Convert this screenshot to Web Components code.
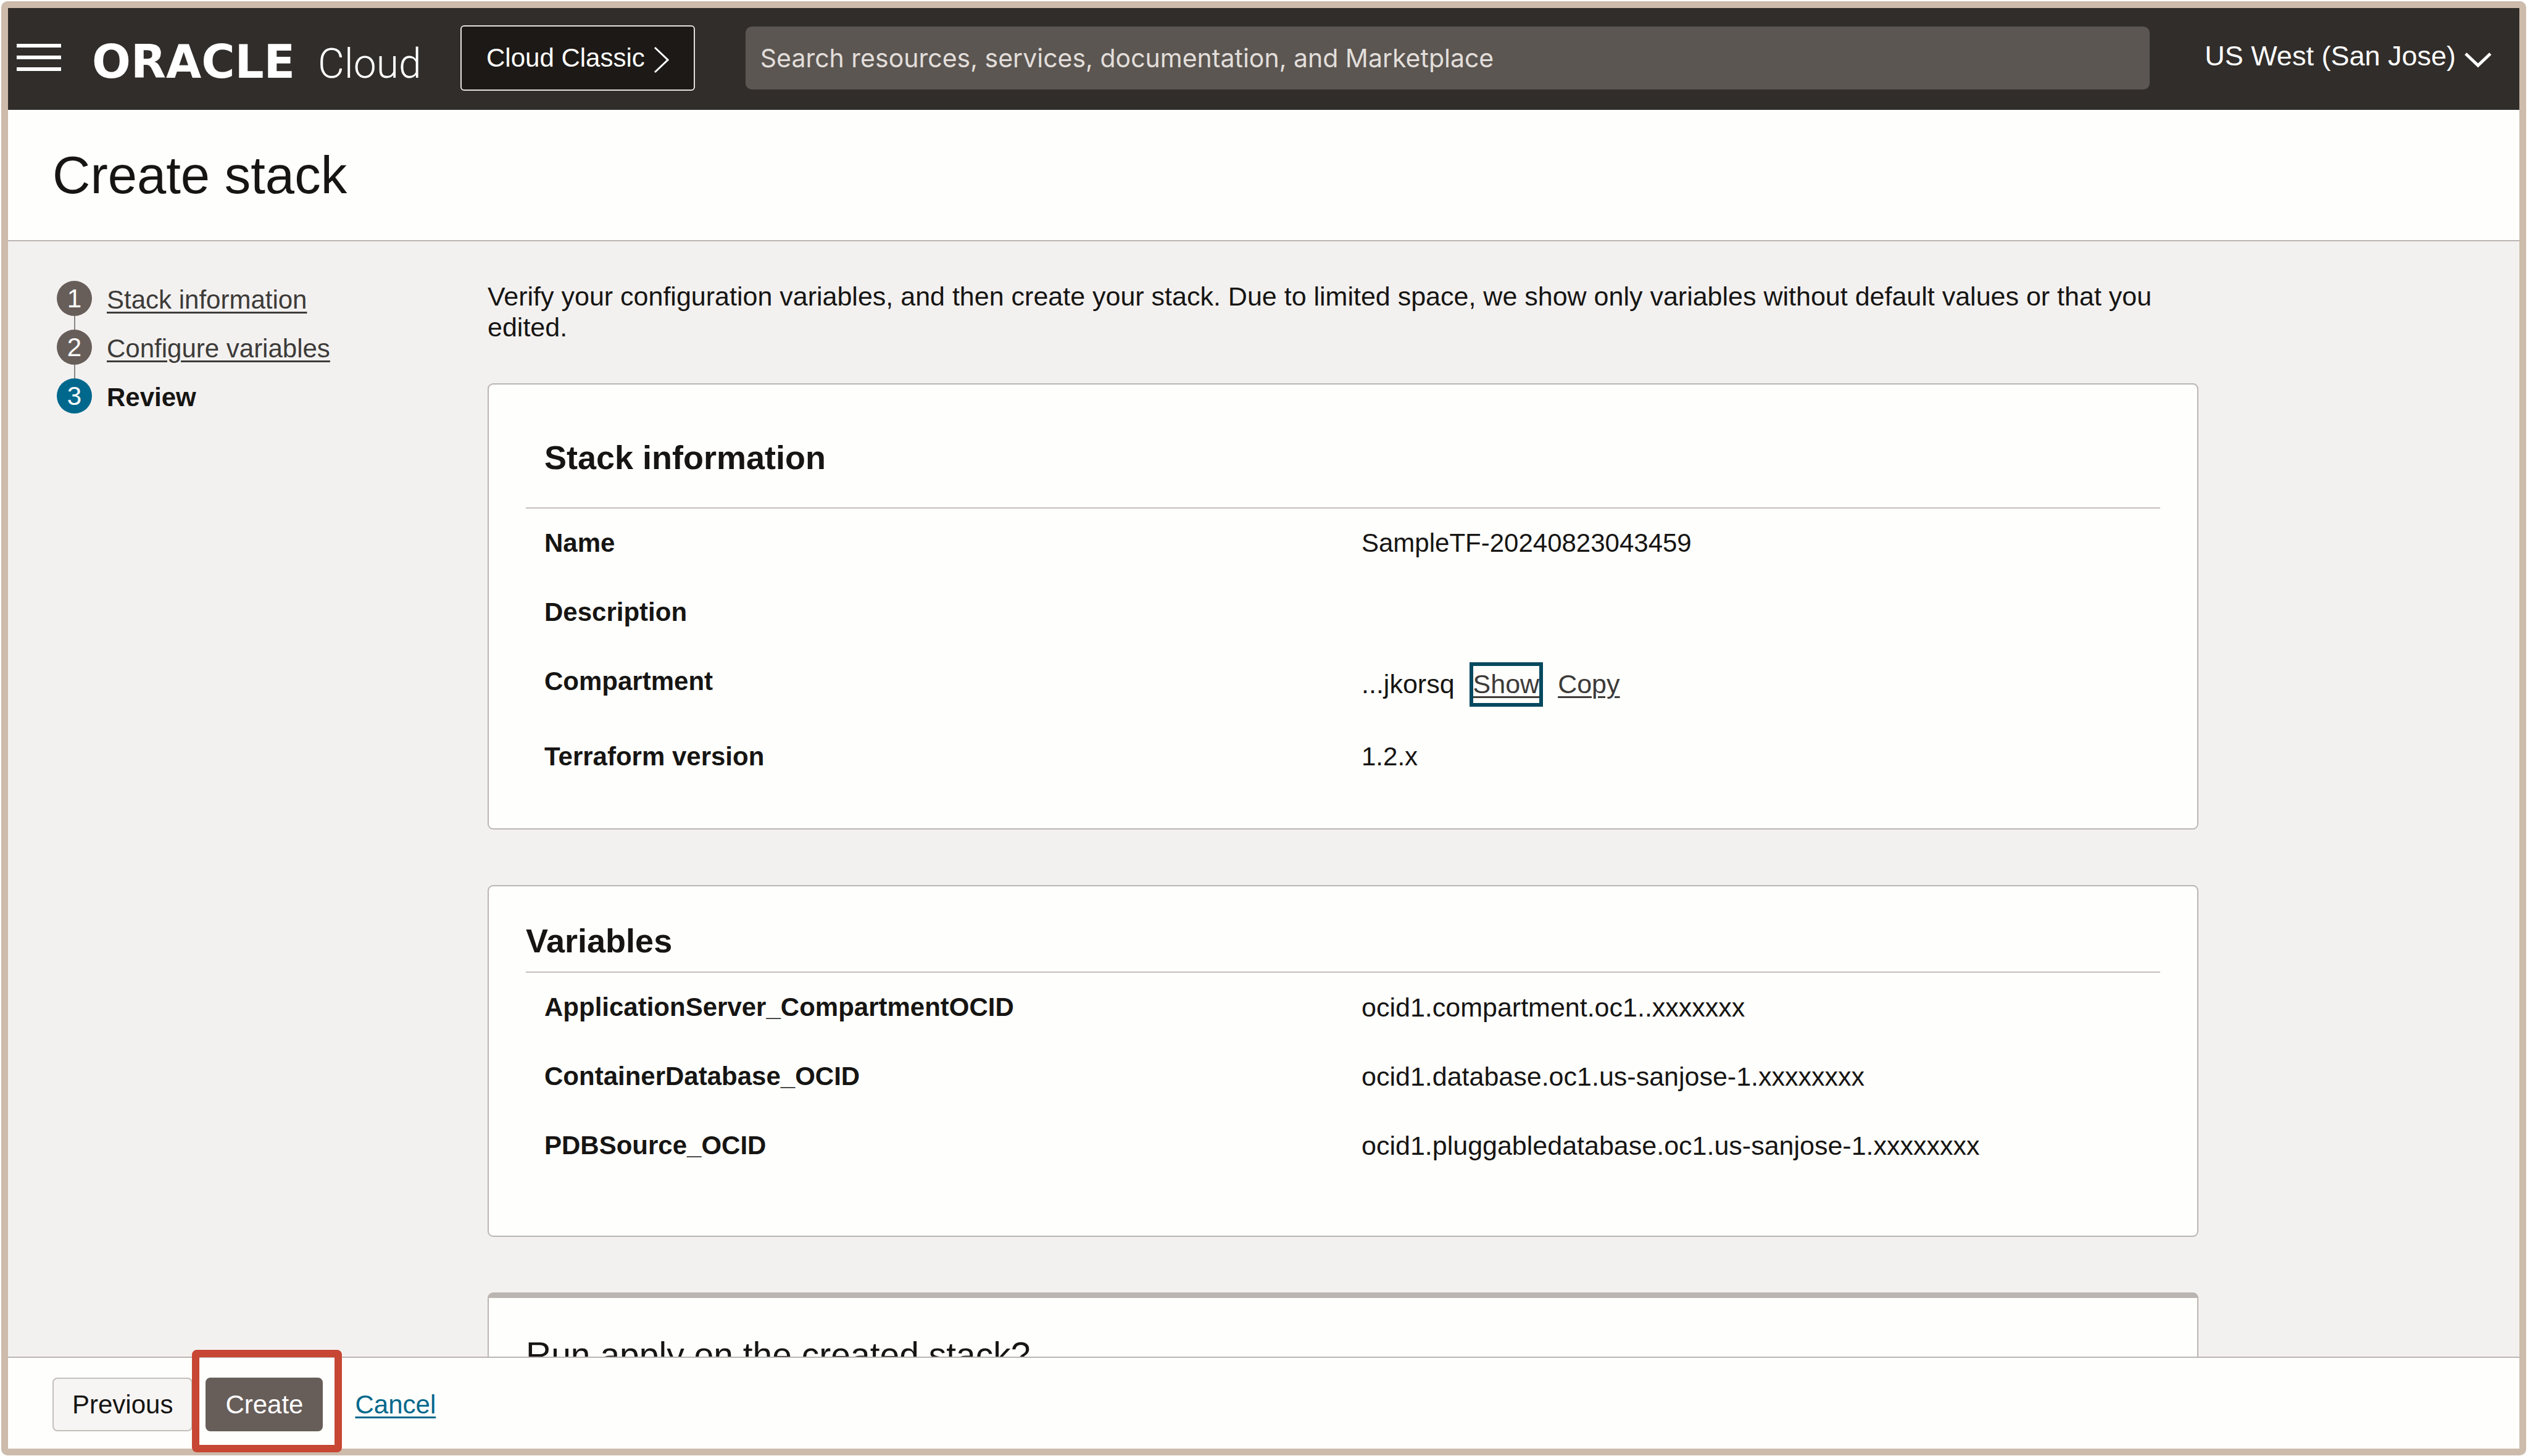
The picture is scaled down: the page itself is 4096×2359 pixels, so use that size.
<!DOCTYPE html>
<html lang="en">
<head>
<meta charset="utf-8">
<title>Create stack</title>
<style>
  :root {
    --text: #161513;
    --paper: #fefefc;
    --ground: #f3f1f0;
    --line: #bbb5b1;
    --neutral: #675e5a;
    --accent: #00688c;
    --size: 42px;
    --prose: 43px;
    --leading: 50px;
  }
  html, body { height: 100%; }
  body {
    margin: 0;
    background: #fff;
    color: var(--text);
    font: var(--size)/var(--leading) "Liberation Sans", Arial, sans-serif;
  }
</style>
</head>
<body>
<console-shell>
  <console-header slot="header" region="US West (San Jose)"></console-header>
  <page-title slot="title">Create stack</page-title>
  <wizard-steps slot="steps">
    <wizard-step number="1" href="#stack">Stack information</wizard-step>
    <wizard-step number="2" href="#variables">Configure variables</wizard-step>
    <wizard-step number="3" current>Review</wizard-step>
  </wizard-steps>
  <review-intro>Verify your configuration variables, and then create your stack. Due to limited space, we show only variables without default values or that you edited.</review-intro>
  <review-card variant="roomy" heading="Stack information">
    <review-row label="Name">SampleTF-20240823043459</review-row>
    <review-row label="Description"></review-row>
    <review-row label="Compartment"><masked-id>...jkorsq</masked-id></review-row>
    <review-row label="Terraform version">1.2.x</review-row>
  </review-card>
  <review-card heading="Variables">
    <review-row kind="variable" label="ApplicationServer_CompartmentOCID">ocid1.compartment.oc1..xxxxxxx</review-row>
    <review-row kind="variable" label="ContainerDatabase_OCID">ocid1.database.oc1.us-sanjose-1.xxxxxxxx</review-row>
    <review-row kind="variable" label="PDBSource_OCID">ocid1.pluggabledatabase.oc1.us-sanjose-1.xxxxxxxx</review-row>
  </review-card>
  <review-card variant="question" heading="Run apply on the created stack?"></review-card>
  <wizard-actions slot="footer"></wizard-actions>
</console-shell>

<script>
const define = (name, html, setup) => {
  const template = document.createElement('template');
  template.innerHTML = html;
  customElements.define(name, class extends HTMLElement {
    constructor() {
      super();
      this.attachShadow({ mode: 'open' }).append(template.content.cloneNode(true));
    }
    connectedCallback() {
      if (setup) setup(this, this.shadowRoot);
    }
  });
};

define('console-shell', `
  <style>
    :host {
      display: flex; flex-direction: column; box-sizing: border-box;
      height: calc(100vh - 3px); margin: 2px 3px 1px 2px;
      border: 11px solid #cdbbab; border-radius: 10px;
      background: var(--paper);
    }
    .body {
      flex: 1; min-height: 0; overflow: hidden;
      display: grid; grid-template-columns: 698px minmax(0, 1fr); align-items: start;
      padding: 64px 520px 0 79px; background: var(--ground);
    }
    main { display: flex; flex-direction: column; gap: 90px; }
  </style>
  <slot name="header"></slot>
  <slot name="title"></slot>
  <div class="body">
    <slot name="steps"></slot>
    <main><slot></slot></main>
  </div>
  <slot name="footer"></slot>`);

define('console-header', `
  <style>
    :host {
      display: flex; align-items: center; padding: 28px 45px 31px 14px;
      background: #312d2a; color: #fff;
    }
    button { font: inherit; color: inherit; margin: 0; padding: 0; background: none; border: 0; }
    svg { display: block; fill: none; stroke: currentColor; }
    .menu { padding-bottom: 2px; }
    .logo { display: flex; align-items: baseline; width: 597px; margin-left: 50px; line-height: 80px; padding-top: 16px; box-sizing: border-box; }
    .mark { width: 366px; font-family: "DejaVu Sans", sans-serif; font-weight: 700; font-size: 74px; }
    .product { font-family: Roboto, "Liberation Sans", sans-serif; font-weight: 300; font-size: 66px; }
    .classic {
      display: flex; align-items: center; gap: 14px; box-sizing: border-box;
      height: 106px; padding: 0 40px; background: #1d1916;
      border: 2px solid #e4e1dd; border-radius: 6px;
    }
    .classic svg { margin-top: 6px; }
    input {
      flex: 1; min-width: 0; height: 102px; box-sizing: border-box; margin: 0 89px 0 82px;
      padding: 0 24px; border: 0; border-radius: 10px; background: #5b5651;
      color: #fff; font: 41px Inter, "Liberation Sans", sans-serif;
    }
    input::placeholder { color: #e2dedb; opacity: 1; }
    .region { display: flex; align-items: center; gap: 14px; font-size: 45px; line-height: 54px; }
    .region span { padding-bottom: 6px; }
    .region svg { margin-top: 6px; }
  </style>
  <button class="menu" aria-label="Navigation menu">
    <svg width="72" height="44" viewBox="0 0 72 44" stroke-width="6"><path d="M0 3h72M0 22h72M0 41h72"/></svg>
  </button>
  <div class="logo"><span class="mark">ORACLE</span><span class="product">Cloud</span></div>
  <button class="classic">Cloud Classic
    <svg width="25" height="44" viewBox="0 0 25 44" stroke-width="3"><path d="M2 2L23 22L2 42"/></svg>
  </button>
  <input type="search" aria-label="Search" placeholder="Search resources, services, documentation, and Marketplace">
  <button class="region" aria-haspopup="menu"><span></span>
    <svg width="44" height="26" viewBox="0 0 44 26" stroke-width="5"><path d="M2 3L22 22L42 3"/></svg>
  </button>`,
  (host, root) => { root.querySelector('.region span').textContent = host.getAttribute('region'); });

define('page-title', `
  <style>
    :host { display: block; padding: 56px 72px; border-bottom: 2px solid var(--line); background: var(--paper); }
    h1 { margin: 0; font-size: 85px; line-height: 99px; font-weight: 400; }
  </style>
  <h1><slot></slot></h1>`);

define('wizard-steps', `
  <style>
    :host { display: block; }
    nav { display: flex; flex-direction: column; gap: 22px; }
  </style>
  <nav aria-label="Steps"><slot></slot></nav>`);

define('wizard-step', `
  <style>
    :host { display: flex; align-items: center; gap: 24px; height: 57px; position: relative; }
    :host(:not(:last-child))::after {
      content: ""; position: absolute; left: 28px; top: 57px; width: 2px; height: 22px; background: #8b8581;
    }
    .dot {
      width: 57px; height: 57px; border-radius: 50%; background: var(--neutral);
      color: #fff; text-align: center; line-height: 57px;
    }
    :host([current]) .dot { background: var(--accent); }
    .label { color: #3d3b39; padding-top: 4px; text-decoration-thickness: 3px; text-underline-offset: 5px; }
    :host([current]) .label { color: inherit; font-weight: 700; }
  </style>
  <span class="dot"></span>
  <a class="label"><slot></slot></a>`,
  (host, root) => {
    root.querySelector('.dot').textContent = host.getAttribute('number');
    if (host.hasAttribute('href')) root.querySelector('a').href = host.getAttribute('href');
  });

define('review-intro', `
  <style>
    :host { display: block; margin-bottom: -24px; padding-right: 60px; font-size: var(--prose); }
    p { margin: 0; }
  </style>
  <p><slot></slot></p>`);

define('review-card', `
  <style>
    :host {
      display: block; padding: 55px 60px 90px;
      border: 2px solid var(--line); border-radius: 9px; background: var(--paper);
    }
    :host([variant=roomy]) { padding-top: 85px; padding-bottom: 60px; }
    :host([variant=question]) { padding-top: 59px; border-top-width: 9px; }
    h2 { margin: 0; padding-bottom: 17px; border-bottom: 2px solid #c4bfbb; font-size: 54px; line-height: 66px; }
    :host([variant=roomy]) h2 { padding: 0 30px 48px; }
    :host([variant=question]) h2 { border: 0; font-size: 57px; font-weight: 400; }
  </style>
  <h2></h2>
  <div role="list"><slot></slot></div>`,
  (host, root) => { root.querySelector('h2').textContent = host.getAttribute('heading'); });

define('review-row', `
  <style>
    :host { display: block; }
    dl { display: grid; grid-template-columns: 1fr 1fr; margin: 0; padding: 31px 0; }
    dt, dd { margin: 0; padding-left: 30px; min-height: 50px; }
    dt { font-weight: 700; }
    :host([kind=variable]) dd { font-size: var(--prose); }
  </style>
  <dl role="listitem"><dt></dt><dd><slot></slot></dd></dl>`,
  (host, root) => { root.querySelector('dt').textContent = host.getAttribute('label'); });

define('masked-id', `
  <style>
    :host { display: flex; gap: 30px; font-size: var(--prose); line-height: 58px; }
    a { color: #3d3b39; text-decoration-thickness: 3px; text-underline-offset: 5px; }
    a:first-of-type { outline: 6px solid #04495f; height: 60px; }
  </style>
  <span><slot></slot></span><a href="#show">Show</a><a href="#copy">Copy</a>`);

define('wizard-actions', `
  <style>
    :host {
      display: flex; align-items: center; gap: 21px; height: 87px; padding: 32px 72px 28px;
      border-top: 2px solid var(--line); background: var(--paper);
    }
    button {
      height: 87px; margin: 0; padding: 0 30px; font: inherit; color: inherit;
      border: 2px solid #c4bfbb; border-radius: 8px; background: #f7f5f4;
    }
    .primary { color: #fff; background: var(--neutral); border-color: var(--neutral); }
    .spot { position: relative; margin-right: 31px; }
    .spot::after {
      content: ""; position: absolute; inset: -45px -31px -34px -22px;
      border: 12px solid #c74634; border-radius: 8px; pointer-events: none;
    }
    a { color: var(--accent); text-decoration-thickness: 3px; text-underline-offset: 5px; }
  </style>
  <button>Previous</button>
  <span class="spot"><button class="primary">Create</button></span>
  <a href="#cancel">Cancel</a>`);
</script>
</body>
</html>
